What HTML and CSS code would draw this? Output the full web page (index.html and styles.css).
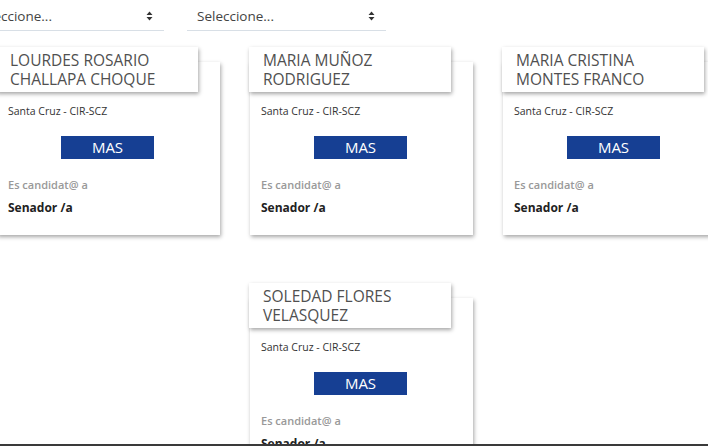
FILE: index.html
```html
<!DOCTYPE html>
<html lang="es">
<head>
<meta charset="utf-8">
<title>Candidatos</title>
<link rel="stylesheet" href="styles.css">
</head>
<body>
<div class="page">
  <div class="filters">
    <div class="select">
      <span class="select-text">Seleccione...</span>
      <svg class="arrows" width="7" height="10" viewBox="0 0 7 10"><path d="M3.5 0.5 L6.5 4 L0.5 4 Z M3.5 9.5 L6.5 6 L0.5 6 Z" fill="#333"/></svg>
    </div>
    <div class="select">
      <span class="select-text">Seleccione...</span>
      <svg class="arrows" width="7" height="10" viewBox="0 0 7 10"><path d="M3.5 0.5 L6.5 4 L0.5 4 Z M3.5 9.5 L6.5 6 L0.5 6 Z" fill="#333"/></svg>
    </div>
  </div>

  <div class="cards">
    <div class="card">
      <div class="card-head">LOURDES ROSARIO CHALLAPA CHOQUE</div>
      <div class="card-body">
        <div class="place">Santa Cruz - CIR-SCZ</div>
        <div class="party-wrap"><span class="party">MAS</span></div>
        <div class="label">Es candidat@ a</div>
        <div class="role">Senador /a</div>
      </div>
    </div>
    <div class="card">
      <div class="card-head">MARIA MUÑOZ RODRIGUEZ</div>
      <div class="card-body">
        <div class="place">Santa Cruz - CIR-SCZ</div>
        <div class="party-wrap"><span class="party">MAS</span></div>
        <div class="label">Es candidat@ a</div>
        <div class="role">Senador /a</div>
      </div>
    </div>
    <div class="card">
      <div class="card-head">MARIA CRISTINA MONTES FRANCO</div>
      <div class="card-body">
        <div class="place">Santa Cruz - CIR-SCZ</div>
        <div class="party-wrap"><span class="party">MAS</span></div>
        <div class="label">Es candidat@ a</div>
        <div class="role">Senador /a</div>
      </div>
    </div>
    <div class="card">
      <div class="card-head">SOLEDAD FLORES VELASQUEZ</div>
      <div class="card-body">
        <div class="place">Santa Cruz - CIR-SCZ</div>
        <div class="party-wrap"><span class="party">MAS</span></div>
        <div class="label">Es candidat@ a</div>
        <div class="role">Senador /a</div>
      </div>
    </div>
  </div>
</div>
<div class="bottom-edge"></div>
</body>
</html>
```

FILE: styles.css
```css
html, body {
  margin: 0;
  padding: 0;
  background: #fff;
  overflow: hidden;
}

body {
  font-family: "Open Sans", "Noto Sans", sans-serif;
  color: #333;
}

.page {
  width: 740px;
}

.filters {
  display: flex;
  gap: 23px;
  margin-left: -35px;
  padding-top: 2px;
}

.select {
  width: 199px;
  height: 29px;
  border-bottom: 1px solid #d8dfe6;
  display: flex;
  align-items: center;
  justify-content: space-between;
  padding: 0 11px 0 10px;
  box-sizing: border-box;
}

.select-text {
  font-size: 13.5px;
  color: #444;
}

.arrows {
  display: block;
}

.cards {
  display: flex;
  flex-wrap: wrap;
  justify-content: center;
  column-gap: 30px;
  row-gap: 48px;
  width: 729px;
  margin-left: -3px;
  margin-top: 16px;
}

.card {
  width: 223px;
  display: flex;
  flex-direction: column;
}

.card-head {
  position: relative;
  z-index: 1;
  width: 202px;
  height: 45px;
  box-sizing: border-box;
  margin-left: -1px;
  padding: 4px 22px 0 14px;
  background: #fff;
  box-shadow: 1px 2px 4px rgba(0, 0, 0, 0.35);
  font-size: 15.5px;
  line-height: 19px;
  color: #505050;
}

.card-body {
  margin-top: -30px;
  padding: 41px 11px 18px 11px;
  background: #fff;
  box-shadow: 1px 2px 4px rgba(0, 0, 0, 0.35);
}

.place {
  font-size: 10.5px;
  line-height: 16px;
  color: #333;
}

.party-wrap {
  display: flex;
  justify-content: center;
  margin-top: 17px;
}

.party {
  display: block;
  width: 93px;
  height: 23px;
  background: #163f93;
  color: #fff;
  font-size: 15px;
  line-height: 23px;
  text-align: center;
  margin-left: -2px;
}

.label {
  margin-top: 18px;
  font-size: 11px;
  line-height: 16px;
  font-weight: 600;
  color: #999;
}

.role {
  margin-top: 6px;
  font-size: 12px;
  line-height: 18px;
  font-weight: 700;
  color: #222;
}

.bottom-edge {
  position: fixed;
  left: 0;
  right: 0;
  bottom: 0;
  height: 2px;
  background: #3a3a3a;
}
```
